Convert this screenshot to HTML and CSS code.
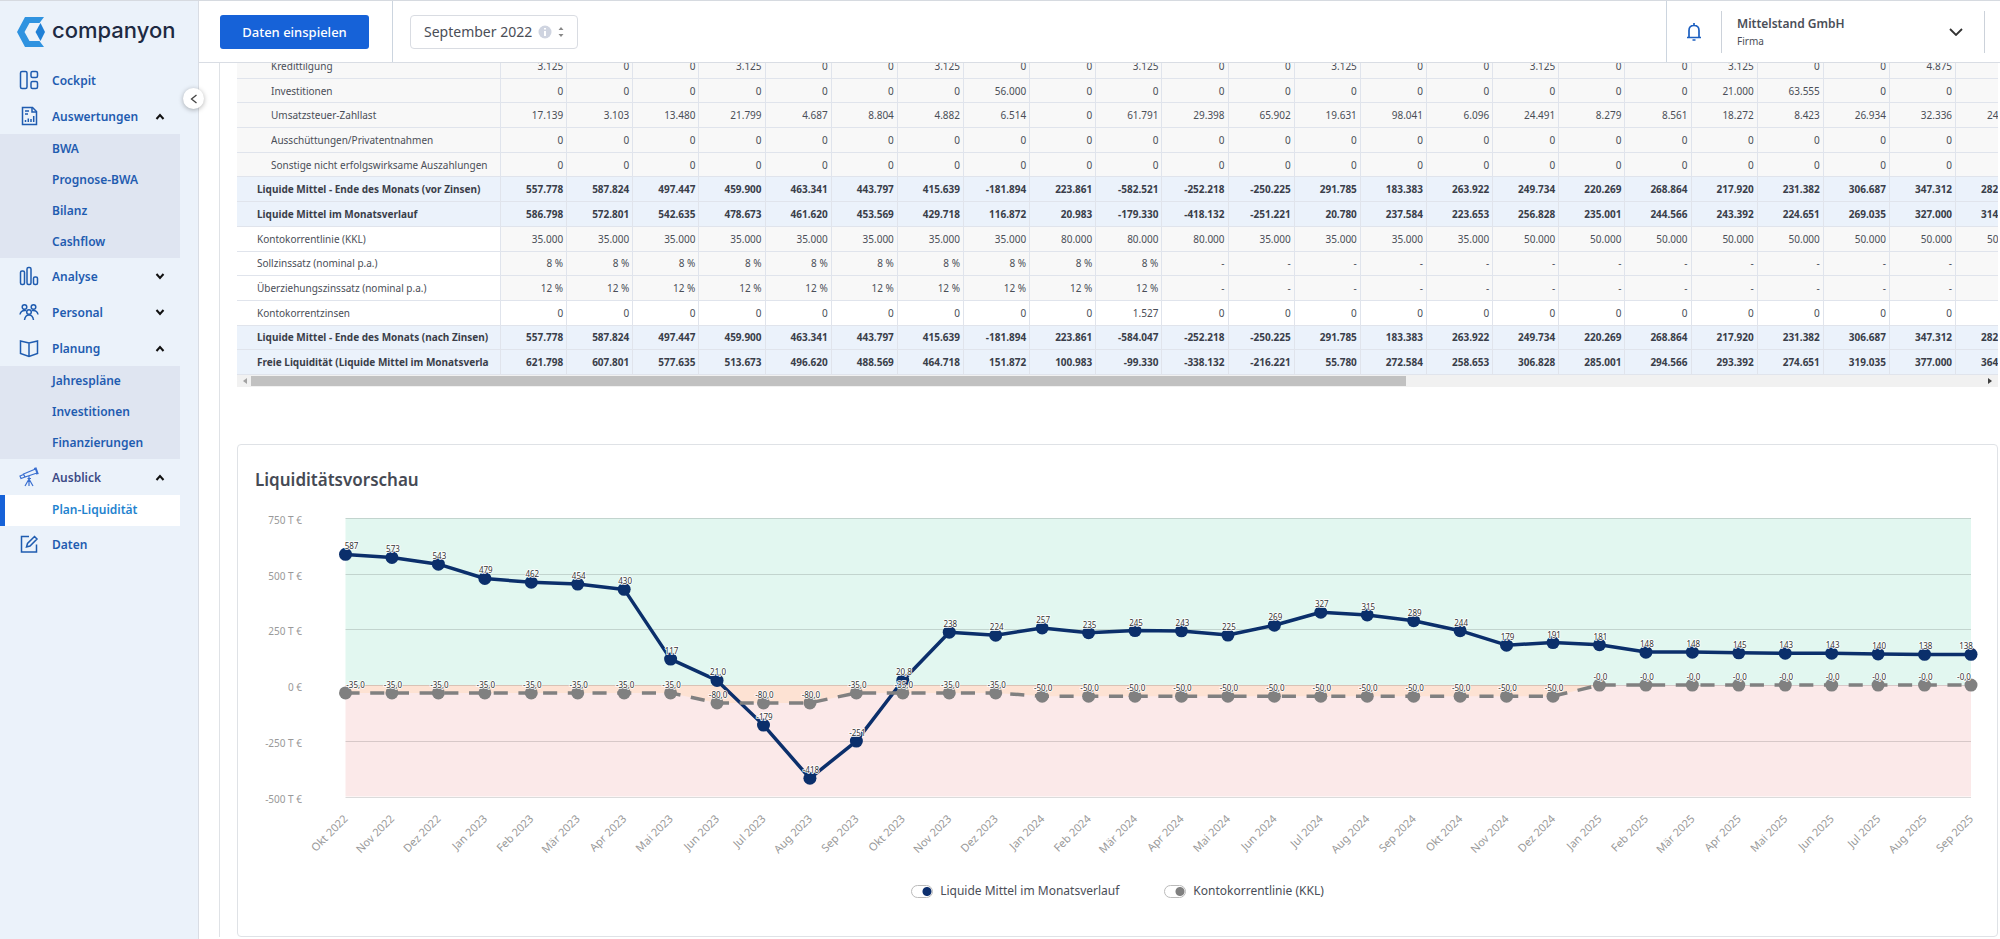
FILE: index.html
```
<!DOCTYPE html>
<html lang="de">
<head>
  <meta charset="UTF-8">
  <meta name="viewport" content="width=device-width, initial-scale=1.0">
  <title>companyon - Plan-Liquidität</title>
  <link rel="stylesheet" href="styles.css">
</head>
<body>
  <!-- Sidebar -->
  <aside class="sidebar">
    <a class="logo" href="#">
      <svg width="28" height="30" viewBox="0 0 28 30">
        <path d="M8 0H27L22.500 6H12.500L7.500 15L12.500 24H22.500L27 30H8L0 15Z" fill="#2f93e0"/>
        <path d="M23.500 6L28 15L23.500 24L18.500 15Z" fill="#1f80d6"/>
      </svg>
      <span>companyon</span>
    </a>
    <button class="collapse" type="button" aria-label="Menü einklappen">
      <svg width="8" height="10" viewBox="0 0 8 10"><path d="M6.500 1L1.500 5L6.500 9" fill="none" stroke="#444" stroke-width="1.300"/></svg>
    </button>
    <nav class="menu">
      <a class="item" href="#">
        <svg class="icon" viewBox="0 0 20 20"><rect x="1.500" y="1.500" width="6.500" height="17" rx="1.500"/><rect x="12" y="1.500" width="6.500" height="6" rx="1.500"/><rect x="12" y="11.500" width="6.500" height="7" rx="1.500"/></svg>
        <span>Cockpit</span>
      </a>
      <button class="item" type="button" aria-expanded="true">
        <svg class="icon" viewBox="0 0 20 20"><path d="M3.500 1.500H13.500L17.500 5.500V18.500H3.500Z"/><path d="M13 1.500V6H17.500M6 5H10M6 8H9M6.500 16V14M9.300 16V12.500M12 16V13M14.700 16V10"/></svg>
        <span>Auswertungen</span>
        <svg class="chevron" viewBox="0 0 10 7"><path d="M1.500 6L5 2L8.500 6"/></svg>
      </button>
      <div class="submenu">
        <a href="#">BWA</a>
        <a href="#">Prognose-BWA</a>
        <a href="#">Bilanz</a>
        <a href="#">Cashflow</a>
      </div>
      <button class="item" type="button" aria-expanded="false">
        <svg class="icon" viewBox="0 0 20 20"><rect x="1.500" y="5" width="4" height="13.500" rx="1.500"/><rect x="8" y="1.500" width="4" height="17" rx="1.500"/><rect x="14.500" y="11" width="4" height="7.500" rx="1.500"/></svg>
        <span>Analyse</span>
        <svg class="chevron" viewBox="0 0 10 7"><path d="M1.500 1L5 5L8.500 1"/></svg>
      </button>
      <button class="item" type="button" aria-expanded="false">
        <svg class="icon" viewBox="0 0 20 20"><circle cx="5.500" cy="5" r="2.300"/><circle cx="14.500" cy="5" r="2.300"/><circle cx="10" cy="10" r="2.300"/><path d="M1 12.500C1.500 9.500 3 8 7 8.500M19 12.500C18.500 9.500 17 8 13 8.500M5.500 18C6 14.500 7.500 13 10 13S14 14.500 14.500 18"/></svg>
        <span>Personal</span>
        <svg class="chevron" viewBox="0 0 10 7"><path d="M1.500 1L5 5L8.500 1"/></svg>
      </button>
      <button class="item" type="button" aria-expanded="true">
        <svg class="icon" viewBox="0 0 20 20"><path d="M1.500 3L10 5L18.500 3V15.500L10 18.500L1.500 15.500ZM10 5V18.500"/></svg>
        <span>Planung</span>
        <svg class="chevron" viewBox="0 0 10 7"><path d="M1.500 6L5 2L8.500 6"/></svg>
      </button>
      <div class="submenu">
        <a href="#">Jahrespläne</a>
        <a href="#">Investitionen</a>
        <a href="#">Finanzierungen</a>
      </div>
      <button class="item current" type="button" aria-expanded="true">
        <svg class="icon thin" viewBox="0 0 20 20"><path d="M4.500 7L16.500 2L18 6L6 10ZM15 1.500L17 1L19 6.500L17 7M1 9L4.500 7.500L6 10L2 11.500ZM10 9V12M10 12L6 19M10 12V19M10 12L14 19M8.500 11.500H12"/></svg>
        <span>Ausblick</span>
        <svg class="chevron" viewBox="0 0 10 7"><path d="M1.500 6L5 2L8.500 6"/></svg>
      </button>
      <div class="submenu">
        <a class="active" href="#">Plan-Liquidität</a>
      </div>
      <a class="item" href="#">
        <svg class="icon" viewBox="0 0 20 20"><path d="M10 2.500H2.500V18H17.500V10.500M7.500 13L8.500 9.500L15.500 2.500L18 5L11 12Z"/></svg>
        <span>Daten</span>
      </a>
    </nav>
  </aside>

  <div class="page">
    <!-- Topbar -->
    <header class="topbar">
      <div class="upload">
        <button class="primary" type="button">Daten einspielen</button>
      </div>
      <div class="month">
        <select aria-label="Monat">
          <option>September 2022</option>
        </select>
        <svg width="14" height="14" viewBox="0 0 14 14"><circle cx="7" cy="7" r="6.500" fill="#cfd4e0"/><path d="M7 6V11M7 3V4.600" stroke="#fff" stroke-width="2"/></svg>
        <svg width="6" height="10" viewBox="0 0 6 10" fill="#888"><path d="M3 0L5.500 3H0.500ZM3 10L5.500 7H0.500Z"/></svg>
      </div>
      <div class="account">
        <button class="bell" type="button" aria-label="Benachrichtigungen">
          <svg width="16" height="20" viewBox="0 0 16 20" fill="none" stroke="#1c5fc0" stroke-width="1.700"><path d="M3 15.500V8.500C3 5.500 5 3.500 8 3.500S13 5.500 13 8.500V15.500M1 15.500H15M8 1V3.500M6.500 18H9.500"/></svg>
        </button>
        <button class="company" type="button">
          <span class="names">
            <span class="name">Mittelstand GmbH</span>
            <span class="role">Firma</span>
          </span>
          <svg width="14" height="8" viewBox="0 0 14 8" fill="none" stroke="#333" stroke-width="1.800"><path d="M1 1L7 7L13 1"/></svg>
        </button>
      </div>
    </header>

    <main class="content">
      <div class="panel">
        <div class="table-wrap">
          <table class="plan">
            <colgroup>
              <col class="label-col">
              <col span="36">
            </colgroup>
            <tbody id="plan-rows"></tbody>
          </table>
        </div>
        <div class="scrollbar">
          <span class="arrow left"></span>
          <div class="track"><div class="thumb"></div></div>
          <span class="arrow right"></span>
        </div>

        <section class="card">
          <h2>Liquiditätsvorschau</h2>
          <svg id="chart" class="chart"></svg>
          <div class="legend">
            <label><input class="toggle blue" type="checkbox" checked>Liquide Mittel im Monatsverlauf</label>
            <label><input class="toggle grey" type="checkbox" checked>Kontokorrentlinie (KKL)</label>
          </div>
        </section>
      </div>
    </main>
  </div>
  <script src="script.js"></script>
</body>
</html>
```
FILE: styles.css
```
* {
  box-sizing: border-box;
}
body {
  margin: 0;
  height: 100vh;
  display: flex;
  overflow: hidden;
  border-top: 1px solid #d6dae0;
  font-family: "Noto Sans", "Open Sans", sans-serif;
  color: #4a4e57;
  background: #fff;
}
button {
  font-family: inherit;
  border: none;
  background: none;
  cursor: pointer;
}
a {
  text-decoration: none;
}

/* Sidebar */
.sidebar {
  position: relative;
  flex: 0 0 199px;
  background: #ebf2fa;
  border-right: 1px solid #d9dde4;
}
.logo {
  display: flex;
  align-items: center;
  gap: 7px;
  height: 61px;
  padding-left: 17px;
  font-family: Inter, sans-serif;
  font-size: 22px;
  font-weight: 500;
  color: #1d2a42;
}
.logo span {
  padding-bottom: 3px;
}
.collapse {
  position: absolute;
  top: 87px;
  right: -6px;
  width: 21px;
  height: 21px;
  padding: 0;
  display: flex;
  align-items: center;
  justify-content: center;
  border-radius: 50%;
  background: #fff;
  box-shadow: 0 1px 5px rgba(0, 0, 0, 0.3);
  z-index: 2;
}
.menu {
  width: 180px;
}
.item {
  width: 100%;
  height: 36px;
  padding: 0 15px 0 19px;
  display: flex;
  align-items: center;
  font-size: 12px;
  font-weight: 600;
  color: #1f5cb0;
  text-align: left;
}
.item span {
  flex: 1;
}
.current {
  color: #3d4a86;
}
.icon {
  width: 20px;
  height: 20px;
  margin-right: 13px;
  fill: none;
  stroke: #1f5cb0;
  stroke-width: 1.5;
}
.thin {
  stroke: #3a6fd0;
  stroke-width: 1.2;
}
.chevron {
  width: 10px;
  height: 7px;
  fill: none;
  stroke: #111;
  stroke-width: 2;
}
.submenu {
  background: #dfe5f1;
}
.submenu a {
  display: block;
  height: 31px;
  line-height: 30px;
  padding-left: 52px;
  font-size: 12px;
  font-weight: 600;
  color: #1f5cb0;
}
.submenu .active {
  padding-left: 47px;
  border-left: 5px solid #1662d8;
  background: #fff;
  color: #1f83cf;
}

/* Topbar */
.page {
  flex: 1;
  min-width: 0;
  display: flex;
  flex-direction: column;
}
.topbar {
  flex: 0 0 62px;
  display: flex;
  align-items: center;
  border-bottom: 1px solid #d9dde4;
}
.upload {
  height: 100%;
  padding: 14px 23px 0 21px;
  border-right: 1px solid #ccd5df;
}
.primary {
  width: 149px;
  height: 34px;
  border-radius: 3px;
  background: #1662d8;
  color: #fff;
  font-size: 13px;
  font-weight: 500;
}
.month {
  display: flex;
  align-items: center;
  gap: 6px;
  height: 34px;
  margin-left: 17px;
  padding: 0 13px;
  border: 1px solid #d9dce2;
  border-radius: 4px;
}
.month select {
  width: 108px;
  padding: 0;
  border: none;
  appearance: none;
  background: none;
  font-family: inherit;
  font-size: 14px;
  color: #4a4e57;
}
.account {
  display: flex;
  align-items: center;
  height: 100%;
  margin-left: auto;
  padding-right: 15px;
  border-left: 1px solid #ccd5df;
}
.bell {
  width: 54px;
  padding: 0;
  line-height: 0;
}
.company {
  width: 264px;
  height: 42px;
  padding: 0 21px 0 15px;
  display: flex;
  align-items: center;
  justify-content: space-between;
  border-left: 1px solid #ccd2da;
  border-right: 1px solid #ccd2da;
  text-align: left;
}
.names {
  display: grid;
  color: #4a4e57;
}
.name {
  font-size: 12px;
  line-height: 18px;
  font-weight: 600;
}
.role {
  font-size: 10px;
  line-height: 16px;
}

/* Content */
.content {
  flex: 1;
  min-height: 0;
  overflow: hidden;
}
.panel {
  min-height: 100%;
  margin-left: 20px;
  padding: 0 2px 0 17px;
  border-left: 1px solid #dfe2e6;
}
.table-wrap {
  margin-top: -9px;
  overflow: hidden;
}
.plan {
  width: calc(150% + 4px);
  height: 321px;
  table-layout: fixed;
  border-collapse: separate;
  border-spacing: 0;
  font-size: 10px;
}
.label-col {
  width: 264px;
}
.plan th,
.plan td {
  padding: 0 3px 0 0;
  border-right: 1px solid #e0e4ec;
  border-bottom: 1px solid #e0e4ec;
  line-height: 16px;
  white-space: nowrap;
  text-align: right;
  background: #f8f8f8;
}
.plan th {
  padding: 0 11px 0 20px;
  text-align: left;
  font-weight: 400;
}
.plan th div {
  overflow: hidden;
}
.plan .indent th {
  padding-right: 8px;
  padding-left: 34px;
}
.plan .line th,
.plan .plain th,
.plan .plain td {
  background: #fff;
}
.plan .sum th,
.plan .sum td {
  background: #ebf2fb;
  font-weight: 700;
  color: #3a3e49;
}
.scrollbar {
  display: flex;
  align-items: center;
  height: 12px;
  padding: 0 6px;
  background: #f1f1f1;
}
.track {
  flex: 1;
  height: 10px;
  margin: 0 5px 0 4px;
}
.thumb {
  width: calc(200% / 3);
  height: 100%;
  background: #c1c1c1;
}
.arrow {
  border-top: 3px solid transparent;
  border-bottom: 3px solid transparent;
}
.left {
  border-right: 4px solid #a3a3a3;
}
.right {
  border-left: 4px solid #404040;
}

/* Chart */
.card {
  margin-top: 57px;
  padding: 23px 0 35px;
  border: 1px solid #dfe2e6;
  border-radius: 4px;
}
.card h2 {
  margin: 0 0 0 17px;
  font-size: 17px;
  line-height: 24px;
  font-weight: 600;
  color: #464a54;
}
.chart {
  display: block;
  width: 100%;
  height: 372px;
}
.grid {
  stroke: #000;
  stroke-opacity: 0.14;
  stroke-width: 1;
}
.axis {
  font-size: 10px;
  fill: #999;
  text-anchor: end;
}
.month-label {
  font-size: 11px;
}
.value {
  font-size: 8px;
  fill: #333;
  stroke: #fff;
  stroke-width: 1.5px;
  paint-order: stroke;
  text-anchor: middle;
}
.legend {
  display: flex;
  justify-content: center;
  gap: 45px;
  margin-top: 17px;
  font-size: 12px;
  line-height: 20px;
}
.legend label {
  display: flex;
  align-items: center;
  gap: 7px;
}
.toggle {
  appearance: none;
  width: 22px;
  height: 13px;
  margin: 0;
  border: 1px solid #bbb;
  border-radius: 7px;
}
.blue {
  background: radial-gradient(circle at 15px 50%, #0d2f6e 4px, transparent 5px);
}
.grey {
  background: radial-gradient(circle at 15px 50%, #808080 4px, transparent 5px);
}
```
FILE: script.js
```
// Table rows: [class, label, values per month]
const fill = (n, value) => Array(n).fill(value);
const zeros = fill(23, '0');
const liquid = '586.798 572.801 542.635 478.673 461.620 453.569 429.718 116.872 20.983 -179.330 -418.132 -251.221 20.780 237.584 223.653 256.828 235.001 244.566 243.392 224.651 269.035 327.000 314.800'.split(' ');
const beforeInterest = '557.778 587.824 497.447 459.900 463.341 443.797 415.639 -181.894 223.861 -582.521 -252.218 -250.225 291.785 183.383 263.922 249.734 220.269 268.864 217.920 231.382 306.687 347.312 282.400'.split(' ');
const afterInterest = beforeInterest.map(v => v === '-582.521' ? '-584.047' : v);

const rows = [
  ['indent', 'Kredittilgung', '3.125 0 0 3.125 0 0 3.125 0 0 3.125 0 0 3.125 0 0 3.125 0 0 3.125 0 0 4.875 0'.split(' ')],
  ['indent', 'Investitionen', '0 0 0 0 0 0 0 56.000 0 0 0 0 0 0 0 0 0 0 21.000 63.555 0 0 0'.split(' ')],
  ['indent', 'Umsatzsteuer-Zahllast', '17.139 3.103 13.480 21.799 4.687 8.804 4.882 6.514 0 61.791 29.398 65.902 19.631 98.041 6.096 24.491 8.279 8.561 18.272 8.423 26.934 32.336 24.500'.split(' ')],
  ['indent', 'Ausschüttungen/Privatentnahmen', zeros],
  ['indent', 'Sonstige nicht erfolgswirksame Auszahlungen', zeros],
  ['sum', 'Liquide Mittel - Ende des Monats (vor Zinsen)', beforeInterest],
  ['sum', 'Liquide Mittel im Monatsverlauf', liquid],
  ['line', 'Kontokorrentlinie (KKL)', [...fill(8, '35.000'), ...fill(3, '80.000'), ...fill(4, '35.000'), ...fill(8, '50.000')]],
  ['line', 'Sollzinssatz (nominal p.a.)', [...fill(10, '8 %'), ...fill(13, '-')]],
  ['line', 'Überziehungszinssatz (nominal p.a.)', [...fill(10, '12 %'), ...fill(13, '-')]],
  ['plain', 'Kontokorrentzinsen', zeros.map((v, i) => i === 9 ? '1.527' : v)],
  ['sum', 'Liquide Mittel - Ende des Monats (nach Zinsen)', afterInterest],
  ['sum', 'Freie Liquidität (Liquide Mittel im Monatsverlauf)', '621.798 607.801 577.635 513.673 496.620 488.569 464.718 151.872 100.983 -99.330 -338.132 -216.221 55.780 272.584 258.653 306.828 285.001 294.566 293.392 274.651 319.035 377.000 364.800'.split(' ')]
];

document.getElementById('plan-rows').innerHTML = rows.map(([cls, label, values]) =>
  `<tr class="${cls}"><th scope="row"><div>${label}</div></th>${values.map(v => `<td>${v}</td>`).join('')}</tr>`
).join('');

// Chart, values in thousand euro
const names = ['Jan', 'Feb', 'Mär', 'Apr', 'Mai', 'Jun', 'Jul', 'Aug', 'Sep', 'Okt', 'Nov', 'Dez'];
const funds = [...liquid.map(Number), 289, 244, 179, 191, 181, 148, 148, 145, 143, 143, 140, 138, 138];
const credit = [...fill(8, -35), ...fill(3, -80), ...fill(4, -35), ...fill(12, -50), ...fill(9, 0)];

function valueLabel(v) {
  if (v === 0) return '-0,0';
  return Math.abs(v) < 100 ? v.toFixed(1).replace('.', ',') : v.toFixed(0);
}

function drawChart() {
  const svg = document.getElementById('chart');
  const left = 107.5;
  const right = svg.clientWidth - 26;
  const top = 26;
  const height = 278.5;
  const x = i => left + i * (right - left) / (funds.length - 1);
  const y = v => top + (750 - v) / 1250 * height;
  const points = data => data.map((v, i) => `${x(i).toFixed(1)},${y(v).toFixed(1)}`);
  const creditLine = points(credit).join(' ');

  let out = `<rect x="${left}" y="${top}" width="${right - left}" height="${y(0) - top}" fill="#e2f7f0"/>`;
  out += `<rect x="${left}" y="${y(0)}" width="${right - left}" height="${y(-500) - y(0)}" fill="#fbe9e9"/>`;
  out += `<polygon points="${left},${y(0)} ${creditLine} ${right},${y(0)}" fill="#fde2d3"/>`;

  for (let v = 750; v >= -500; v -= 250) {
    const line = Math.round(y(v)) + 0.5;
    out += `<line class="grid" x1="${left}" x2="${right}" y1="${line}" y2="${line}"/>`;
    out += `<text class="axis" x="64" y="${Math.round(y(v)) + 6}">${v ? v + ' T €' : '0 €'}</text>`;
  }

  out += `<polyline points="${points(funds).join(' ')}" fill="none" stroke="#0b2f6b" stroke-width="3.5" stroke-linejoin="round"/>`;
  funds.forEach((v, i) => {
    out += `<circle cx="${x(i)}" cy="${y(v)}" r="6.5" fill="#0b2f6b"/>`;
  });
  out += `<polyline points="${creditLine}" fill="none" stroke="#808080" stroke-width="3.5" stroke-dasharray="14.1 10.6"/>`;
  credit.forEach((v, i) => {
    out += `<circle cx="${x(i)}" cy="${y(v)}" r="6.5" fill="#808080"/>`;
  });

  // labels stay inside the plot at both ends
  [funds, credit].forEach(data => data.forEach((v, i) => {
    const text = valueLabel(v);
    const half = text.length * 2;
    const cx = Math.min(Math.max(x(i) + 1, left + half), right - half + 1);
    out += `<text class="value" x="${cx}" y="${y(v) - 5}">${text}</text>`;
  }));

  funds.forEach((v, i) => {
    const month = (i + 9) % 12;
    const year = 2022 + Math.floor((i + 9) / 12);
    const px = x(i) + 3;
    out += `<text class="axis month-label" transform="translate(${px} ${top + height + 23}) rotate(-45)">${names[month]} ${year}</text>`;
  });
  svg.innerHTML = out;
}

drawChart();
window.addEventListener('resize', drawChart);
```
